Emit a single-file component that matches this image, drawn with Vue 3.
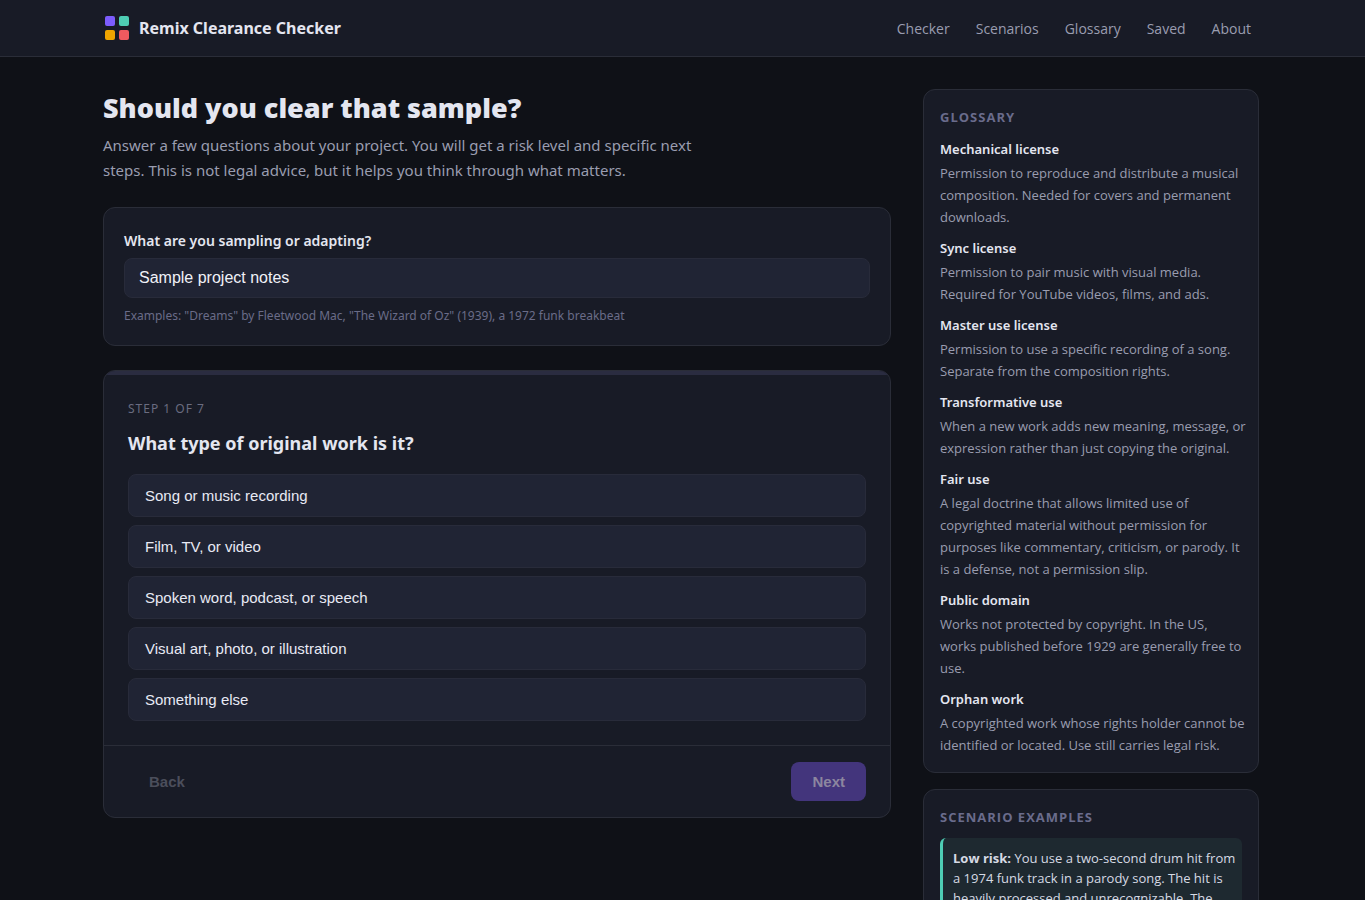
<script setup>
import { ref } from 'vue'

const notes = ref('Sample project notes')
const links = ['Checker', 'Scenarios', 'Glossary', 'Saved', 'About']
const options = [
  'Song or music recording',
  'Film, TV, or video',
  'Spoken word, podcast, or speech',
  'Visual art, photo, or illustration',
  'Something else',
]
const selected = ref('')
const glossary = [
  { term: 'Mechanical license', text: 'Permission to reproduce and distribute a musical\ncomposition. Needed for covers and permanent\ndownloads.' },
  { term: 'Sync license', text: 'Permission to pair music with visual media.\nRequired for YouTube videos, films, and ads.' },
  { term: 'Master use license', text: 'Permission to use a specific recording of a song.\nSeparate from the composition rights.' },
  { term: 'Transformative use', text: 'When a new work adds new meaning, message, or\nexpression rather than just copying the original.' },
  { term: 'Fair use', text: 'A legal doctrine that allows limited use of\ncopyrighted material without permission for\npurposes like commentary, criticism, or parody. It\nis a defense, not a permission slip.' },
  { term: 'Public domain', text: 'Works not protected by copyright. In the US,\nworks published before 1929 are generally free to\nuse.' },
  { term: 'Orphan work', text: 'A copyrighted work whose rights holder cannot be\nidentified or located. Use still carries legal risk.' },
]
const scenario = 'You use a two-second drum hit from\na 1974 funk track in a parody song. The hit is\nheavily processed and unrecognizable. The'
</script>

<template>
  <div class="page">
    <header class="topbar">
      <div class="wrap bar">
        <a class="brand" href="#">
          <svg width="28" height="28" viewBox="0 0 28 28" aria-hidden="true">
            <rect x="2" y="2" width="10" height="10" rx="2" fill="#7c5cfc" />
            <rect x="16" y="2" width="10" height="10" rx="2" fill="#4ecdb4" />
            <rect x="2" y="16" width="10" height="10" rx="2" fill="#f0a500" />
            <rect x="16" y="16" width="10" height="10" rx="2" fill="#ee5a5f" />
          </svg>
          <span>Remix Clearance Checker</span>
        </a>
        <nav class="nav">
          <a v-for="l in links" :key="l" href="#">{{ l }}</a>
        </nav>
      </div>
    </header>

    <div class="wrap layout">
      <main>
        <h1>Should you clear that sample?</h1>
        <p class="lead">Answer a few questions about your project. You will get a risk level and specific next steps. This is not legal advice, but it helps you think through what matters.</p>

        <section class="card project">
          <label for="project">What are you sampling or adapting?</label>
          <input id="project" v-model="notes" type="text" />
          <p class="hint">Examples: "Dreams" by Fleetwood Mac, "The Wizard of Oz" (1939), a 1972 funk breakbeat</p>
        </section>

        <section class="card wizard">
          <div class="progress"></div>
          <div class="step">
            <p class="count">Step 1 of 7</p>
            <h2>What type of original work is it?</h2>
            <div class="options">
              <button v-for="o in options" :key="o" type="button" :class="{ chosen: selected === o }" @click="selected = o">{{ o }}</button>
            </div>
          </div>
          <div class="actions">
            <button type="button" class="back" disabled>Back</button>
            <button type="button" class="next" :disabled="!selected">Next</button>
          </div>
        </section>
      </main>

      <aside>
        <section class="card side">
          <h3>Glossary</h3>
          <dl>
            <template v-for="g in glossary" :key="g.term">
              <dt>{{ g.term }}</dt>
              <dd>{{ g.text }}</dd>
            </template>
          </dl>
        </section>
        <section class="card side">
          <h3>Scenario examples</h3>
          <p class="scenario"><strong>Low risk:</strong> {{ scenario }}</p>
        </section>
      </aside>
    </div>
  </div>
</template>

<style>
body {
  margin: 0;
  background: #0f1117;
}
</style>

<style scoped>
.page {
  color: #e4e6f0;
  font-family: "Segoe UI", "Noto Sans", sans-serif;
  font-size: 15px;
}
h1, h2, h3, p, dl, dd {
  margin: 0;
}
a {
  color: inherit;
  text-decoration: none;
}
.topbar {
  background: #181b26;
  border-bottom: 1px solid #2a2d38;
  padding: 0 23px 0 20px;
}
.wrap {
  max-width: 1156px;
  margin: 0 auto;
}
.bar {
  display: flex;
  align-items: center;
  justify-content: space-between;
  height: 56px;
}
.brand {
  display: flex;
  align-items: center;
  gap: 8px;
  font-size: 16px;
  font-weight: 700;
}
.nav {
  display: flex;
  gap: 26px;
  padding-right: 8px;
  font-family: "Segoe UI", "Open Sans", sans-serif;
  font-size: 14px;
  color: #9a9db0;
}
.layout {
  display: grid;
  grid-template-columns: minmax(0, 1fr) 336px;
  gap: 32px;
  align-items: start;
  padding: 32px 23px 32px 20px;
}
h1 {
  font-family: "Segoe UI", "Open Sans", sans-serif;
  font-size: 27px;
  line-height: 38px;
  font-weight: 800;
}
.lead {
  max-width: 600px;
  margin: 6px 0 24px;
  line-height: 25px;
  color: #9a9db0;
}
.card {
  background: #181b26;
  border: 1px solid #2a2d38;
  border-radius: 12px;
}
.project {
  padding: 20px;
  margin-bottom: 24px;
}
.project label {
  display: block;
  margin-bottom: 4px;
  font-size: 14px;
  line-height: 26px;
  font-weight: 600;
}
input {
  display: block;
  box-sizing: border-box;
  width: 100%;
  height: 40px;
  padding: 0 14px;
  border: 1px solid #282b3a;
  border-radius: 8px;
  background: #202434;
  color: #f0f1f8;
  font: 16px "Liberation Sans", Arial, sans-serif;
}
.hint {
  margin-top: 8px;
  font-size: 12px;
  line-height: 19px;
  color: #6a6c88;
}
.wizard {
  overflow: hidden;
}
.progress {
  height: 4px;
  background: #2a2c40;
}
.step {
  padding: 24px;
}
.count {
  font-size: 12px;
  line-height: 20px;
  letter-spacing: 1px;
  text-transform: uppercase;
  color: #6a6c80;
}
h2 {
  margin: 9px 0 16px;
  font-size: 18px;
  line-height: 30px;
  font-weight: 700;
}
.options {
  display: grid;
  gap: 8px;
}
.options button {
  height: 43px;
  padding: 0 16px;
  border: 1px solid #282b3a;
  border-radius: 8px;
  background: #202434;
  color: #e8eaf4;
  font: 15px "Liberation Sans", Arial, sans-serif;
  text-align: left;
}
.options .chosen {
  border-color: #7c5cfc;
}
.actions {
  display: flex;
  justify-content: space-between;
  padding: 16px 24px;
  border-top: 1px solid #2a2d38;
}
.actions button {
  height: 39px;
  padding: 0 20px;
  border: 1px solid transparent;
  border-radius: 8px;
  font: bold 15px "Liberation Sans", Arial, sans-serif;
}
.actions .back {
  background: transparent;
  color: #4b4e5b;
}
.actions .next {
  background: #7c5cfc;
  color: #fff;
}
.actions .next:disabled {
  background: #43357c;
  color: #8c869f;
}
aside {
  display: grid;
  gap: 16px;
  font-family: "Segoe UI", "Open Sans", sans-serif;
}
.side {
  padding: 16px;
}
h3 {
  margin-bottom: 10px;
  font-size: 13px;
  line-height: 22px;
  letter-spacing: 1px;
  text-transform: uppercase;
  color: #6a6c8c;
}
dt {
  margin-bottom: 2px;
  font-family: "Segoe UI", "Noto Sans", sans-serif;
  font-size: 13px;
  line-height: 22px;
  font-weight: 600;
}
dd {
  margin-right: -14px;
  font-size: 13px;
  line-height: 22px;
  white-space: pre-line;
  color: #9a9db0;
}
dd:not(:last-child) {
  margin-bottom: 9px;
}
.scenario {
  padding: 10px 0 10px 10px;
  border-left: 3px solid #4ecdb4;
  border-radius: 6px;
  background: #1e2930;
  font-size: 13px;
  line-height: 20px;
  white-space: pre-line;
  color: #d6dae4;
}
</style>
